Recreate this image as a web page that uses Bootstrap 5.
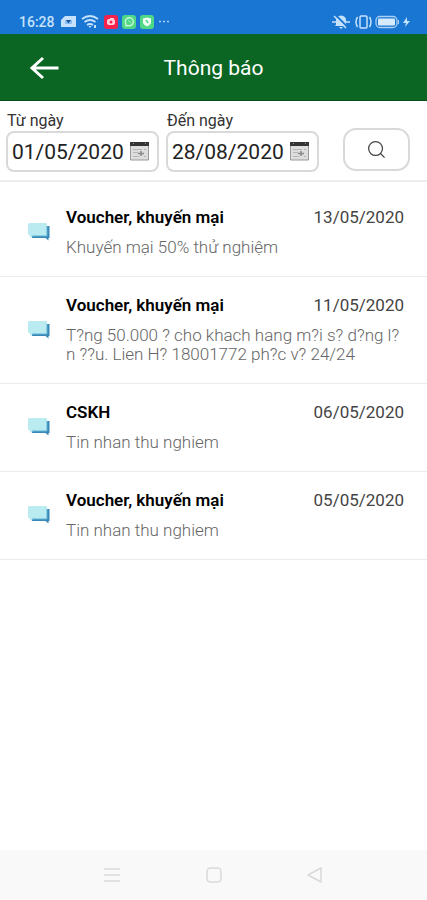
<!DOCTYPE html>
<html lang="vi">
<head>
<meta charset="utf-8">
<meta name="viewport" content="width=device-width, initial-scale=1">
<title>Thông báo</title>
<link href="https://cdn.jsdelivr.net/npm/bootstrap@5.3.0/dist/css/bootstrap.min.css" rel="stylesheet">
<style>
body { font-family: Roboto, "Noto Sans", sans-serif; background: #fff; color: #111; }
svg { display: block; flex: none; }
.status-bar { background: #1976d2; color: #c5e1fb; height: 34px; padding: 10px 16px 0 19px; font-size: 14px; font-weight: 500; line-height: 24px; }
.status-group { height: 24px; }
.status-icons { margin-left: 5px; }
.app-header { background: #0b6623; height: 67px; padding-top: 2px; border-bottom: 1px solid #08501b; }
.app-title { font-size: 21px; line-height: 28px; font-weight: 400; color: #fff; }
.back-btn { left: 24px; }
.filter-bar { padding: 10px 17px 8px 6px; border-bottom: 2px solid #ededed; }
.filter-fields { gap: 7px; }
.filter-label { font-size: 16px; line-height: 20px; color: #333; padding-left: 1px; }
.date-box { border: 2px solid #d9d9d9; border-radius: 8px; height: 41px; padding: 0 8px 0 4px; }
.date-input { font-size: 21px; line-height: 28px; color: #222; width: 100%; min-width: 0; outline: 0; }
.search-btn { width: 67px; height: 43px; border: 2px solid #d9d9d9; border-radius: 13px; margin-left: 24px; margin-bottom: 1px; }
.notice-list { padding-top: 7px; }
.notice { gap: 16px; padding: 19px 23px 19px 28px; border-bottom: 1px solid #ebebeb; line-height: 19px; }
.notice-title { font-size: 17px; line-height: 19px; font-weight: 600; color: #000; }
.notice-date { font-size: 17px; color: #444; }
.notice-text { font-size: 17px; line-height: 19px; font-weight: 300; color: #666; padding-right: 4px; margin-top: 11px; }
.nav-keys { background: #f9f9f9; height: 50px; padding: 0 61px; }
.nav-key { width: 102px; }
</style>
</head>
<body>
<svg class="d-none" aria-hidden="true">
  <symbol id="chat" viewBox="0 0 22 19">
    <path d="M19 3h2.500v12h-1v2.500L17.500 15H4v-2h15z" fill="#3989b8"/>
    <path d="M1.500 0H18q1 0 1 1v11q0 1-1 1H5.500L2 15v-2.500Q0 12 0 11V1.500Q0 0 1.500 0z" fill="#b9ebf1"/>
    <path d="M4 13h15V3" fill="none" stroke="#5fb2d2"/>
  </symbol>
  <symbol id="calendar" viewBox="0 0 19 19">
    <path d="M.5 1h18v17H.5z" fill="#ddd" stroke="#999"/>
    <path d="M0 0h19v4H0z" fill="#333"/>
    <path d="M3 1.500h1m11 0h1" stroke="#999"/>
    <path d="M3 7.500h9M3 10.500h5m6-3h2M3 14.500h6m5 0h2" stroke="#b5b5b5"/>
    <path d="M8 11.500h6M11 9v5" stroke="#888" stroke-width="1.500"/>
  </symbol>
</svg>
<div class="d-flex flex-column min-vh-100">
  <div class="status-bar d-flex justify-content-between">
    <div class="status-group d-flex align-items-center">
      <span>16:28</span>
      <svg class="status-icons" width="110" height="16" viewBox="0 0 110 16" aria-hidden="true">
        <path d="M5 2h11v11H1V6z" fill="#c5e1fb"/><path d="M5 6h7v4H5z" fill="#8fc0ef"/><path d="M6 6h5L8.500 9.500z" fill="#1558a0"/>
        <g fill="none" stroke="#c5e1fb" stroke-width="1.800"><path d="M22 5q8-6 16 0"/><path d="M24.500 8q5.500-4 11 0"/><path d="M27 11q3-2 6 0"/></g>
        <path d="M28.500 12h3L30 14zM34 11h2v3h-2z" fill="#c5e1fb"/>
        <rect x="44" y="1" width="14" height="14" rx="3" fill="#f5224b"/>
        <rect x="47" y="5" width="8" height="6" rx="2" fill="#ffd4dc"/><circle cx="51" cy="8" r="1.500" fill="#f5224b"/><path d="M50 4h4v1h-4z" fill="#ffd4dc"/>
        <rect x="62" y="1" width="14" height="14" rx="3" fill="#4fd987"/>
        <path d="M66 12l-.5-3a4 4 0 1 1 2.500 2.500z" fill="none" stroke="#cff8dd" stroke-width="1.300"/><path d="M68 6l3 3" stroke="#9bedb9"/>
        <rect x="80" y="1" width="14" height="14" rx="3" fill="#4fd987"/>
        <path d="M83 4.500l4-1 4 1V9q-1 2-4 3.500Q84 11 83 9z" fill="#f0fff4"/><path d="M86 6l2 3" stroke="#4fd987" stroke-width="1.500"/>
        <path d="M99 7.500h2m2 0h2m2 0h2" stroke="#a9d0f5" stroke-width="1.500"/>
      </svg>
    </div>
    <div class="status-group d-flex align-items-center">
      <svg width="80" height="16" viewBox="0 0 80 16" aria-hidden="true">
        <path d="M5 10.500V6q0-4 5-4.500Q15 2 15 6v4.500l1 1.500H4zM8 13h4l-2 2z" fill="#c5e1fb"/>
        <path d="M4.500 1l13 13" stroke="#1976d2" stroke-width="2"/><path d="M3 2l12 12M1 8h4m10 0h4" stroke="#c5e1fb" stroke-width="1.500"/>
        <g fill="none" stroke="#c5e1fb" stroke-width="1.500"><rect x="29" y="2" width="7" height="12" rx="1"/><path d="M26.500 3q-3 5 0 10M38.500 3q3 5 0 10"/></g>
        <rect x="45" y="2.500" width="21" height="11" rx="4" fill="none" stroke="#a9d0f5" stroke-width="1.300"/><rect x="47" y="4.500" width="17" height="7" rx="1" fill="#d7eafc"/><path d="M67.500 6v4" stroke="#a9d0f5"/>
        <path d="M76 3l-4 6h3l-1 4 5-6h-3z" fill="#c5e1fb"/>
      </svg>
    </div>
  </div>

  <header class="app-header position-relative d-flex align-items-center justify-content-center">
    <button type="button" class="back-btn btn border-0 position-absolute p-1" aria-label="Quay lại">
      <svg width="32" height="24" viewBox="0 0 32 24" fill="none" stroke="#fff" stroke-width="3"><path d="M30.500 12H4M15 2L4 12l11 10"/></svg>
    </button>
    <h1 class="app-title m-0">Thông báo</h1>
  </header>

  <form class="filter-bar d-flex align-items-end">
    <div class="filter-fields d-flex flex-fill">
      <div class="flex-fill">
        <label class="filter-label d-block" for="from">Từ ngày</label>
        <div class="date-box d-flex align-items-center">
          <input class="date-input border-0 p-0 bg-transparent" id="from" type="text" size="8" value="01/05/2020">
          <button type="button" class="btn border-0 p-0" aria-label="Chọn từ ngày"><svg width="19" height="19"><use href="#calendar"/></svg></button>
        </div>
      </div>
      <div class="flex-fill">
        <label class="filter-label d-block" for="to">Đến ngày</label>
        <div class="date-box d-flex align-items-center">
          <input class="date-input border-0 p-0 bg-transparent" id="to" type="text" size="8" value="28/08/2020">
          <button type="button" class="btn border-0 p-0" aria-label="Chọn đến ngày"><svg width="19" height="19"><use href="#calendar"/></svg></button>
        </div>
      </div>
    </div>
    <button type="button" class="search-btn btn bg-white p-0 d-flex align-items-center justify-content-center flex-shrink-0" aria-label="Tìm kiếm">
      <svg width="19" height="19" viewBox="0 0 20 20" fill="none" stroke="#444" stroke-width="1.300"><circle cx="9" cy="9" r="7.300"/><path d="M14.200 14.200L18.500 18.500"/></svg>
    </button>
  </form>

  <main class="flex-fill">
    <ul class="notice-list list-unstyled m-0">
      <li class="notice d-flex align-items-center">
        <svg width="22" height="19" aria-hidden="true"><use href="#chat"/></svg>
        <div class="flex-fill">
          <div class="d-flex justify-content-between"><h2 class="notice-title m-0">Voucher, khuyến mại</h2><time class="notice-date" datetime="2020-05-13">13/05/2020</time></div>
          <p class="notice-text mb-0">Khuyến mại 50% thử nghiệm</p>
        </div>
      </li>
      <li class="notice d-flex align-items-center">
        <svg width="22" height="19" aria-hidden="true"><use href="#chat"/></svg>
        <div class="flex-fill">
          <div class="d-flex justify-content-between"><h2 class="notice-title m-0">Voucher, khuyến mại</h2><time class="notice-date" datetime="2020-05-11">11/05/2020</time></div>
          <p class="notice-text mb-0">T?ng 50.000 ? cho khach hang m?i s? d?ng l?<wbr>n ??u. Lien H? 18001772 ph?c v? 24/24</p>
        </div>
      </li>
      <li class="notice d-flex align-items-center">
        <svg width="22" height="19" aria-hidden="true"><use href="#chat"/></svg>
        <div class="flex-fill">
          <div class="d-flex justify-content-between"><h2 class="notice-title m-0">CSKH</h2><time class="notice-date" datetime="2020-05-06">06/05/2020</time></div>
          <p class="notice-text mb-0">Tin nhan thu nghiem</p>
        </div>
      </li>
      <li class="notice d-flex align-items-center">
        <svg width="22" height="19" aria-hidden="true"><use href="#chat"/></svg>
        <div class="flex-fill">
          <div class="d-flex justify-content-between"><h2 class="notice-title m-0">Voucher, khuyến mại</h2><time class="notice-date" datetime="2020-05-05">05/05/2020</time></div>
          <p class="notice-text mb-0">Tin nhan thu nghiem</p>
        </div>
      </li>
    </ul>
  </main>

  <nav class="nav-keys d-flex justify-content-between align-items-center" aria-label="Điều hướng">
    <button type="button" class="nav-key btn border-0 p-0 d-flex justify-content-center" aria-label="Gần đây"><svg width="16" height="16" viewBox="0 0 16 16" stroke="#d9d9d9" stroke-width="1.500"><path d="M0 2h16M0 8h16M0 14h16"/></svg></button>
    <button type="button" class="nav-key btn border-0 p-0 d-flex justify-content-center" aria-label="Trang chủ"><svg width="16" height="16" viewBox="0 0 16 16" fill="none" stroke="#d9d9d9" stroke-width="1.500"><rect x="1" y="1" width="14" height="14" rx="3.500"/></svg></button>
    <button type="button" class="nav-key btn border-0 p-0 d-flex justify-content-center" aria-label="Trở lại"><svg width="16" height="16" viewBox="0 0 16 16" fill="none" stroke="#d9d9d9" stroke-width="1.500" stroke-linejoin="round"><path d="M14 1v14L1 8z"/></svg></button>
  </nav>
</div>
<script src="https://cdn.jsdelivr.net/npm/bootstrap@5.3.0/dist/js/bootstrap.bundle.min.js"></script>
</body>
</html>
